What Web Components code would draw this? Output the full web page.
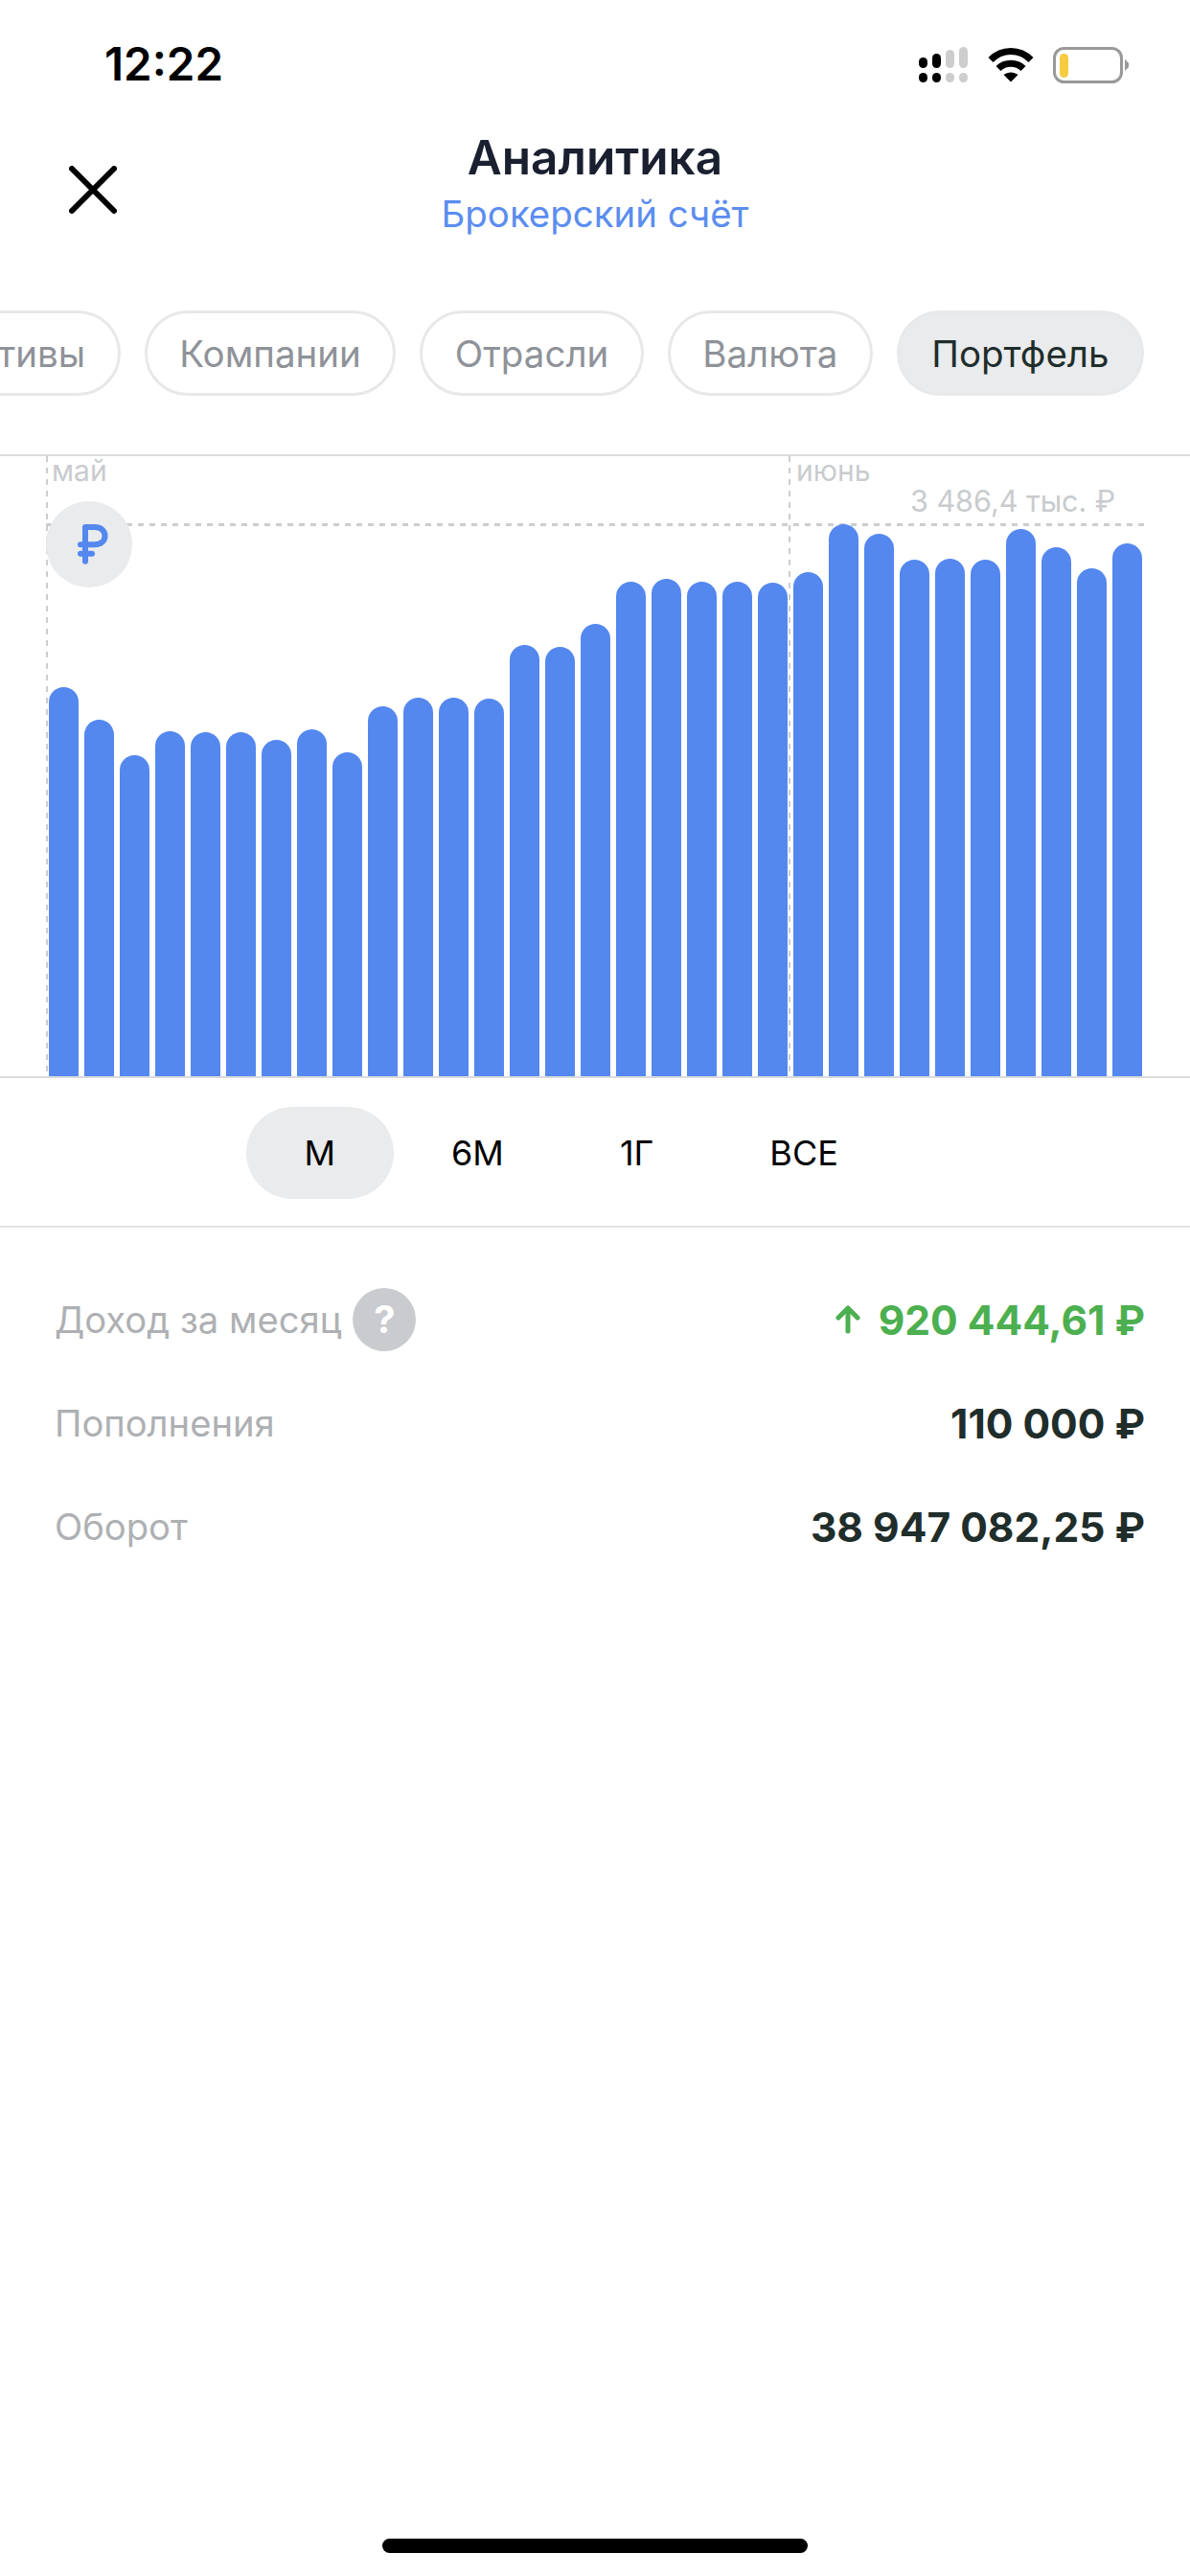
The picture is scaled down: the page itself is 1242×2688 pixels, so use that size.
<!DOCTYPE html>
<html lang="ru">
<head>
<meta charset="utf-8">
<title>Аналитика</title>
<style>
html,body{margin:0;background:#fff}
body{font-family:Inter,Roboto,sans-serif;width:1242px;height:2688px;overflow:hidden}
</style>
</head>
<body>
<analytics-app>
  <status-bar time="12:22"></status-bar>
  <nav-header title="Аналитика" subtitle="Брокерский счёт"></nav-header>
  <chip-row>
    <filter-chip>Активы</filter-chip>
    <filter-chip>Компании</filter-chip>
    <filter-chip>Отрасли</filter-chip>
    <filter-chip>Валюта</filter-chip>
    <filter-chip active>Портфель</filter-chip>
  </chip-row>
  <bar-chart></bar-chart>
  <period-tabs>
    <period-tab active>М</period-tab>
    <period-tab>6М</period-tab>
    <period-tab>1Г</period-tab>
    <period-tab>ВСЕ</period-tab>
  </period-tabs>
  <stat-list>
    <stat-row label="Доход за месяц" help up>920 444,61 ₽</stat-row>
    <stat-row label="Пополнения">110 000 ₽</stat-row>
    <stat-row label="Оборот">38 947 082,25 ₽</stat-row>
  </stat-list>
  <home-indicator></home-indicator>
</analytics-app>
<script>
function def(name, css, html){
  customElements.define(name, class extends HTMLElement{
    constructor(){
      super();
      const r=this.attachShadow({mode:'open'});
      r.innerHTML='<style>'+css+'</style>'+(typeof html==='function'?'':html);
    }
    connectedCallback(){
      if(typeof html==='function') this.shadowRoot.innerHTML='<style>'+css+'</style>'+html(this);
    }
  });
}
def('analytics-app',':host{display:flex;flex-direction:column;height:2688px}','<slot></slot>');

def('status-bar',`
:host{display:flex;align-items:flex-start;justify-content:space-between;height:130px;box-sizing:border-box;padding:41px 64px 0 109px}
.t{font:600 47.5px/52px Inter,Roboto,sans-serif;color:#000}
.i{display:flex;margin:8px 0 0}
svg{display:block}
`, h=>`<span class="t">${h.getAttribute('time')||''}</span><div class="i">
<svg width="51" height="38" viewBox="0 0 51 38" style="margin-right:21px"><g fill="#000"><rect x="0" y="11" width="9" height="11" rx="4.5"/><rect x="14" y="7" width="9" height="15" rx="4.5"/><rect x="0" y="27" width="9" height="10" rx="4.5"/><rect x="14" y="27" width="9" height="10" rx="4.5"/></g><g fill="#cdcdcd"><rect x="28" y="3" width="9" height="19" rx="4.5"/><rect x="42" y="0" width="9" height="22" rx="4.5"/><rect x="28" y="27" width="9" height="10" rx="4.5"/><rect x="42" y="27" width="9" height="10" rx="4.5"/></g></svg>
<svg width="48" height="38" viewBox="0 0 48 38" style="margin-right:20px"><g fill="none" stroke="#000" stroke-width="7"><path d="M3 13.5C14.5 1.5 33.5 1.5 45 13.5"/><path d="M11 22.5C18 15.5 30 15.5 37 22.5"/></g><path d="M24 36.5L16.5 29C21 25.5 27 25.5 31.5 29Z" fill="#000"/></svg>
<svg width="79" height="38" viewBox="0 0 79 38"><rect x="1.5" y="1.5" width="70" height="35" rx="10" fill="none" stroke="#999" stroke-width="3"/><rect x="7" y="7" width="9" height="25" rx="4.5" fill="#f6cb3f"/><path d="M75 12.5L79 17V21L75 25Z" fill="#999"/></svg>
</div>`);

def('nav-header',`
:host{display:block;position:relative;height:130px;text-align:center}
.x{position:absolute;left:72px;top:43px;display:block}
.a{font:600 49.5px/56px Inter,Roboto,sans-serif;color:#1a2030;padding-top:6px}
.b{font:400 38.4px/44px Inter,Roboto,sans-serif;color:#5b8def;margin-top:9px}
`, h=>`<svg class="x" width="50" height="50" viewBox="0 0 50 50"><path d="M3 3L47 47M47 3L3 47" stroke="#000" stroke-width="6" stroke-linecap="round" fill="none"/></svg>
<div class="a">${h.getAttribute('title')||''}</div><div class="b">${h.getAttribute('subtitle')||''}</div>`);

def('chip-row',`
:host{display:flex;justify-content:flex-end;gap:25px;height:214px;box-sizing:border-box;padding:64px 48px 0 0;overflow:hidden}
`,'<slot></slot>');

def('filter-chip',`
:host{display:flex;flex:none;align-items:center;height:89px;box-sizing:border-box;padding:0 33.5px;border:3px solid #e7e8e9;border-radius:45px;font:400 38.5px Inter,Roboto,sans-serif;color:#8f9299}
:host([active]){background:#e9ebec;border-color:#e7e9ea;color:#1f2d2b}
`,'<slot></slot>');

def('bar-chart',`
:host{display:block;position:relative;height:647px;border-top:2px solid #dadbdd;border-bottom:2px solid #dadbdd}
.bars{position:absolute;left:51px;right:50px;bottom:0;top:0;display:flex;align-items:flex-end;gap:6px}
.bars i{display:block;width:31px;flex:none;background:#5488ef;border-radius:15.5px 15.5px 0 0}
.v{position:absolute;top:0;bottom:0;width:2px;background:repeating-linear-gradient(to bottom,#cbcdd0 0 6px,transparent 6px 12px)}
.h{position:absolute;left:48px;width:1146px;top:70px;height:3px;background:repeating-linear-gradient(to right,#cbcdd0 0 6px,transparent 6px 12px)}
.l{position:absolute;font:400 30px/30px Inter,Roboto,sans-serif;color:#c9cbce;white-space:nowrap}
.c{position:absolute;left:48px;top:47px;width:90px;height:90px;border-radius:50%;background:#e9ebec;display:flex;align-items:center;justify-content:center}
.c svg{display:block}
`, ()=>{
  const tops=[717,751,788,763,764,764,772,761,785,737,728,728,729,673,675,651,607,604,607,607,608,597,547,557,584,583,584,552,571,593,567];
  return `<div class="v" style="left:48px"></div><div class="v" style="left:823px"></div><div class="h"></div>
<span class="l" style="left:54px;top:0">май</span><span class="l" style="left:831px;top:0">июнь</span>
<span class="l" style="left:950px;top:32px;font-size:30.5px">3 486,4 тыс. ₽</span>
<div class="bars">${tops.map(t=>`<i style="height:${1123-t}px"></i>`).join('')}</div>
<div class="c"><svg width="40" height="46" viewBox="0 0 40 46"><path d="M16 5V40.7M16 5H26C40 5 40 23.3 26 23.3H11M11 32.7H23" fill="none" stroke="#5488ef" stroke-width="6" stroke-linecap="round" stroke-linejoin="round"/></svg></div>`;
});

def('period-tabs',`
:host{display:flex;height:156px;box-sizing:border-box;padding:30px 0 0 257px;border-bottom:2px solid #e3e4e6}
`,'<slot></slot>');

def('period-tab',`
:host{display:flex;align-items:center;height:96px;box-sizing:border-box;padding:0 60.5px;border-radius:48px;font:400 36px Inter,Roboto,sans-serif;color:#000}
:host([active]){background:#e9ebec}
`,'<slot></slot>');

def('stat-list',`
:host{display:flex;flex-direction:column;padding-top:42px}
`,'<slot></slot>');

def('stat-row',`
:host{display:flex;align-items:center;justify-content:space-between;height:108px;padding:0 47px 0 57px;font-family:Inter,Roboto,sans-serif}
.l{display:flex;align-items:center;gap:12px;font-size:38.2px;color:#aeb0b3}
.q{width:66px;height:66px;border-radius:50%;background:#c9cbce;color:#fff;font:700 40px/66px Inter,Roboto,sans-serif;text-align:center}
.v{display:flex;align-items:center;gap:17px;font-weight:700;font-size:42.5px;color:#1f2d2b}
:host([up]) .v{color:#4caf50}
svg{display:block}
`, h=>`<div class="l">${h.getAttribute('label')||''}${h.hasAttribute('help')?'<span class="q">?</span>':''}</div>
<div class="v">${h.hasAttribute('up')?'<svg width="30" height="30" viewBox="0 0 30 30"><path d="M15 27V4M5 13L15 3L25 13" fill="none" stroke="#4caf50" stroke-width="5" stroke-linecap="round" stroke-linejoin="round"/></svg>':''}<span><slot></slot></span></div>`);

def('home-indicator',`
:host{display:flex;justify-content:center;margin-top:auto;padding-bottom:24px}
div{width:444px;height:15px;border-radius:8px;background:#000}
`,'<div></div>');
</script>
</body>
</html>
